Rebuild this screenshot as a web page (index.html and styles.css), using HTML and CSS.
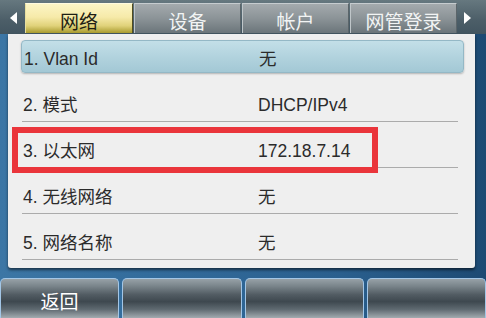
FILE: index.html
```html
<!DOCTYPE html>
<html lang="zh-CN">
<head>
<meta charset="utf-8">
<title>网络</title>
<link rel="stylesheet" href="styles.css">
</head>
<body>
<div class="screen">
  <div class="topbar">
    <span class="arrow arrow-left"></span>
    <div class="tabs">
      <div class="tab active">网络</div>
      <div class="tab">设备</div>
      <div class="tab">帐户</div>
      <div class="tab">网管登录</div>
    </div>
    <span class="arrow arrow-right"></span>
  </div>
  <div class="panel">
    <div class="row selected"><span class="label">1. Vlan Id</span><span class="value">无</span></div>
    <div class="row first"><span class="label">2. 模式</span><span class="value">DHCP/IPv4</span></div>
    <div class="row"><span class="label">3. 以太网</span><span class="value">172.18.7.14</span></div>
    <div class="row"><span class="label">4. 无线网络</span><span class="value">无</span></div>
    <div class="row"><span class="label">5. 网络名称</span><span class="value">无</span></div>
    <div class="annot"></div>
  </div>
  <div class="softkeys">
    <div class="key">返回</div>
    <div class="key"></div>
    <div class="key"></div>
    <div class="key"></div>
  </div>
</div>
</body>
</html>
```
FILE: styles.css
```css
html, body {
  margin: 0;
  padding: 0;
}
body {
  width: 486px;
  height: 318px;
  overflow: hidden;
  font-family: "Liberation Sans", "Noto Sans CJK SC", sans-serif;
}
.screen {
  width: 486px;
  height: 318px;
  display: flex;
  flex-direction: column;
  background: linear-gradient(90deg, #3c76a5 0%, #336c9c 30%, #2a5f8e 70%, #1d4a73 100%);
}
.topbar {
  height: 34px;
  flex: none;
  display: flex;
  align-items: flex-start;
  background: linear-gradient(#66787f, #4c5e68 60%, #425560);
}
.arrow {
  width: 0;
  height: 0;
  margin-top: 12px;
  border-top: 6px solid transparent;
  border-bottom: 6px solid transparent;
}
.arrow-left {
  margin-left: 10px;
  margin-right: 8px;
  border-right: 7px solid #ffffff;
}
.arrow-right {
  margin-left: 7px;
  border-left: 7px solid #ffffff;
}
.tabs {
  display: flex;
  gap: 1px;
  margin-top: 3px;
}
.tab {
  width: 107px;
  height: 30px;
  box-sizing: border-box;
  display: flex;
  align-items: center;
  justify-content: center;
  padding-top: 3px;
  font-size: 19px;
  color: #f2f4f4;
  background: linear-gradient(#a4aaad, #8b9397 50%, #6b757a);
  border-top: 1px solid #c6cccf;
  border-left: 1px solid #bfc6c9;
  border-right: 1px solid #5b656a;
}
.tab.active {
  width: 108px;
  color: #1e1e14;
  background: linear-gradient(#fcf5c6, #f6eaa9 45%, #e0d27a 75%, #a99b2e);
  border-top: 1px solid #fffbe0;
  border-left: 1px solid #e8dfa0;
  border-right: 1px solid #514c20;
}
.panel {
  position: relative;
  height: 234px;
  flex: none;
  margin-left: 8px;
  width: 467px;
  box-sizing: border-box;
  padding-top: 6px;
  background: #efefef;
  border-radius: 0 0 3px 3px;
  box-shadow: 0 2px 3px rgba(0, 0, 0, 0.55);
  font-size: 17.5px;
  color: #2b2b2b;
}
.row {
  display: flex;
  align-items: flex-end;
  height: 45px;
  box-sizing: content-box;
  margin: 0 17px 0 14px;
  padding-left: 1px;
  padding-bottom: 0;
  border-bottom: 1px solid #ababab;
  line-height: 20px;
}
.row .label,
.row .value {
  padding-bottom: 6px;
}
.row.first {
  height: 48px;
}
.row.selected {
  height: 31px;
  margin: 0 11px 0 13px;
  padding-left: 2px;
  border: 1px solid #94b8c6;
  border-radius: 4px;
  background: linear-gradient(#c3dfe8, #b2d3de 50%, #a3c8d5);
  box-shadow: 0 1px 2px rgba(0, 0, 0, 0.25);
}
.row.selected .label,
.row.selected .value {
  padding-bottom: 3px;
}
.label {
  width: 235px;
  flex: none;
  white-space: pre;
}
.value {
  white-space: nowrap;
}
.annot {
  position: absolute;
  left: 4px;
  top: 93px;
  width: 366px;
  height: 46px;
  box-sizing: border-box;
  border: 6px solid #ea353b;
}
.softkeys {
  margin-top: 10px;
  height: 40px;
  flex: none;
  display: flex;
  gap: 3px;
}
.key {
  flex: 1;
  box-sizing: border-box;
  border: 1px solid #a3c6e6;
  border-bottom: none;
  border-radius: 5px 5px 0 0;
  background: linear-gradient(#97a1a7, #7a858b 18%, #525c63 40%, #3e484f 58%, #5f6a71 78%, #a2abb0);
  color: #ffffff;
  font-size: 19px;
  display: flex;
  align-items: center;
  justify-content: center;
  padding-top: 4px;
}
```
